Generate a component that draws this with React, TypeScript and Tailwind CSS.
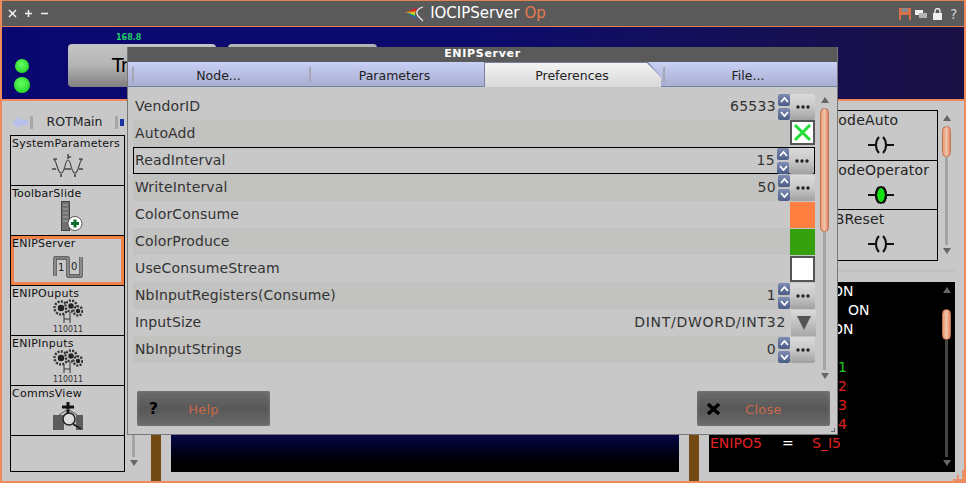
import React from "react";

const font = "[font-family:'DejaVu_Sans',sans-serif]";

const rows: { label: string; kind: string; value?: string }[] = [
  { label: "VendorID", kind: "spin", value: "65533" },
  { label: "AutoAdd", kind: "check" },
  { label: "ReadInterval", kind: "spin", value: "15" },
  { label: "WriteInterval", kind: "spin", value: "50" },
  { label: "ColorConsume", kind: "orange" },
  { label: "ColorProduce", kind: "green" },
  { label: "UseConsumeStream", kind: "white" },
  { label: "NbInputRegisters(Consume)", kind: "spin", value: "1" },
  { label: "InputSize", kind: "combo", value: "DINT/DWORD/INT32" },
  { label: "NbInputStrings", kind: "spin", value: "0" },
];

const WaveIcon = () => (
  <svg width="34" height="24" viewBox="0 0 34 24" fill="none" stroke="#444" strokeWidth="1.1">
    <path d="M2 5 C6 5 6 19 10 19 C14 19 14 6 17 6 C20 6 20 19 24 19 C28 19 28 5 32 5" />
    <path d="M1 15h4M13 15h7M28 15h4" strokeWidth="1.6" />
    <path d="M17 0v5M20 3h-3" strokeWidth="1.4" />
    <path d="M10 20v3M24 20v3" strokeWidth="1.6" />
    <path d="M6 5h-3M31 5h-3" strokeWidth="1.6" />
  </svg>
);

const SliderIcon = () => (
  <svg width="22" height="30" viewBox="0 0 22 30" className="ml-[9px]">
    <rect x="0.5" y="0.5" width="8" height="29" fill="#707070" stroke="#444" />
    <path d="M2 4h5M2 8h5M2 12h5M2 16h5M2 20h5" stroke="#a8a8a8" />
    <circle cx="14" cy="22.5" r="7" fill="#fff" stroke="#555" />
    <path d="M14 18.5v8M10 22.5h8" stroke="#0a6b2c" strokeWidth="3" />
  </svg>
);

const OneZeroIcon = () => (
  <svg width="30" height="23" viewBox="0 0 30 23" fill="none">
    <path d="M2 21V3h13v18h13V2" stroke="#444" strokeWidth="3.4" strokeLinejoin="round" />
    <path d="M2 21V3h13v18h13V2" stroke="#b8b8b8" strokeWidth="1.2" strokeLinejoin="round" />
    <text x="5" y="16" fontSize="10" fill="#222" fontFamily="DejaVu Sans">1</text>
    <text x="18" y="15" fontSize="10" fill="#222" fontFamily="DejaVu Sans">0</text>
  </svg>
);

const Gear = ({ x, y, r }: { x: number; y: number; r: number }) => (
  <g>
    <circle cx={x} cy={y} r={r} fill="#c8c8c8" stroke="#333" strokeWidth="2.4" strokeDasharray="2 1.3" />
    <circle cx={x} cy={y} r={r * 0.5} fill="#222" />
  </g>
);

const GearsIcon = () => (
  <svg width="30" height="38" viewBox="0 0 30 38">
    <Gear x={8} y={11} r={6.5} />
    <Gear x={18} y={9} r={5.5} />
    <Gear x={25} y={14} r={4.5} />
    <path d="M11 18v8M17 15v11M11 22h6" stroke="#333" fill="none" />
    <text x="0" y="35" fontSize="9" fill="#333" fontFamily="DejaVu Sans" textLength="30" lengthAdjust="spacingAndGlyphs">110011</text>
  </svg>
);

const CommsIcon = () => (
  <svg width="30" height="28" viewBox="0 0 30 28">
    <rect x="0" y="13" width="11" height="15" fill="#5c5c5c" />
    <rect x="23" y="13" width="7" height="15" fill="#5c5c5c" />
    <path d="M15 0v12M9 5h12" stroke="#111" strokeWidth="3" />
    <path d="M6 13l9-6 9 6" stroke="#555" fill="none" />
    <circle cx="16" cy="17" r="6" fill="#ddd" stroke="#222" strokeWidth="1.5" />
    <path d="M20 22l8 5" stroke="#222" strokeWidth="2" />
  </svg>
);

const Contact = ({ on }: { on?: boolean }) => (
  <svg width="26" height="18" viewBox="0 0 26 18" fill="none" stroke="#111" strokeWidth="2">
    {on && <ellipse cx="13" cy="9" rx="5" ry="8" fill="#14e014" />}
    <path d="M0 9h9M17 9h9" />
    <path d="M11 1C7 5 7 13 11 17M15 1c4 4 4 12 0 16" />
  </svg>
);

const navItems = [
  { name: "SystemParameters", icon: <WaveIcon />, pb: "pb-[7px]" },
  { name: "ToolbarSlide", icon: <SliderIcon />, pb: "pb-[4px]" },
  { name: "ENIPServer", icon: <OneZeroIcon />, active: true, pb: "pb-[4px]" },
  { name: "ENIPOuputs", icon: <GearsIcon />, pb: "" },
  { name: "ENIPInputs", icon: <GearsIcon />, pb: "" },
  { name: "CommsView", icon: <CommsIcon />, pb: "pb-[5px]" },
];

const Thumb = ({ className }: { className: string }) => (
  <div className={`w-[9px] shrink-0 rounded-full border border-[#c8704c] bg-gradient-to-r from-[#e89a78] via-[#f2c4a8] to-[#dc8a68] ${className}`} />
);

// arrows and rail of a scroll bar, thumb given by offset classes
const ScrollBar = ({ thumb, tail, dark, noThumb }: { thumb: string; tail: string; dark?: boolean; noThumb?: boolean }) => (
  <div className="flex w-[9px] flex-col items-center">
    <div className="h-0 w-0 border-x-[4px] border-b-[6px] border-x-transparent border-b-[#666]" />
    {!noThumb && <Thumb className={thumb} />}
    <div className={`w-[3px] ${dark ? "bg-[#444]" : "bg-[#a4a4a4]"} ${tail}`} />
    <div className="mt-[3px] h-0 w-0 border-x-[4px] border-t-[6px] border-x-transparent border-t-[#666]" />
  </div>
);

const Spin = () => (
  <div className="flex h-[26px] w-[12px] flex-col justify-between">
    {[0, 1].map((i) => (
      <div key={i} className="flex h-[12px] items-center justify-center rounded-[2px] bg-gradient-to-b from-[#7c8cb4] to-[#4c5c88]">
        <svg width="9" height="6" viewBox="0 0 9 6" fill="none" stroke="#fff" strokeWidth="1.8">
          <path d={i === 0 ? "M1 5l3.5-4L8 5" : "M1 1l3.5 4L8 1"} />
        </svg>
      </div>
    ))}
  </div>
);

const DotsButton = () => (
  <div className="flex h-[26px] w-[25px] items-center justify-center rounded-[2px] bg-gradient-to-b from-[#dadada] via-[#c8c8c8] to-[#a0a0a0]">
    <svg width="14" height="4" viewBox="0 0 14 4" fill="#222">
      <circle cx="2" cy="2" r="1.7" />
      <circle cx="7" cy="2" r="1.7" />
      <circle cx="12" cy="2" r="1.7" />
    </svg>
  </div>
);

const RowEnd = ({ kind, value }: { kind: string; value?: string }) => {
  if (kind === "spin") {
    return (
      <div className="flex items-center">
        <span className="mr-[2px] text-[14px] tracking-[0.3px] text-[#333]">{value}</span>
        <Spin />
        <DotsButton />
      </div>
    );
  }
  if (kind === "combo") {
    return (
      <div className="-mr-px flex items-center">
        <span className="mr-[5px] text-[14px] tracking-[0.7px] text-[#333]">{value}</span>
        <div className="flex h-[26px] w-[25px] items-center justify-center bg-gradient-to-b from-[#dadada] to-[#a8a8a8]">
          <div className="h-0 w-0 border-x-[7px] border-t-[14px] border-x-transparent border-t-[#555]" />
        </div>
      </div>
    );
  }
  if (kind === "check") {
    return (
      <div className="mb-[2px] h-[25px] w-[25px] border-2 border-[#555] bg-white">
        <svg width="21" height="21" viewBox="0 0 21 21" stroke="#22dd33" strokeWidth="3">
          <path d="M3 3l15 15M18 3L3 18" />
        </svg>
      </div>
    );
  }
  if (kind === "orange") return <div className="h-[26px] w-[25px] bg-[#ff7f40]" />;
  if (kind === "green") return <div className="h-[26px] w-[25px] bg-[#33a00c]" />;
  return <div className="h-[26px] w-[25px] border-2 border-[#555] bg-white" />;
};

const tabs = [
  { name: "Node...", w: "w-[177px]" },
  { name: "Parameters", w: "w-[175px]" },
  { name: "Preferences", w: "w-[179px]" },
  { name: "File...", w: "w-[174px]" },
];

const Dialog = () => (
  <div className="absolute top-[47px] left-[125px] flex h-[388px] w-[711px] flex-col border-x border-b border-[#777] bg-[#c8c8c8]">
    <div className="flex h-[15px] shrink-0 items-center justify-center bg-[#5a5a5a] text-[11px] font-bold tracking-[0.7px] text-white">
      ENIPServer
    </div>
    <div className="flex h-[25px] shrink-0 border-b border-[#7880a4] bg-gradient-to-b from-[#c8d0f6] to-[#a8aed0] pl-[4px] text-[12.5px] text-[#222]">
      {tabs.map((t) =>
        t.name === "Preferences" ? (
          <div key={t.name} className={`-mb-px h-[25px] ${t.w} bg-[#7880a4] [clip-path:polygon(0_0,164px_0,177px_15px,177px_100%,0_100%)]`}>
            <div className="ml-[1px] flex h-full items-center justify-center bg-gradient-to-b from-[#f4f4f4] to-[#d8d8d8] pt-[4px] pr-[4px] [clip-path:polygon(0_1px,162px_1px,176px_15px,176px_100%,0_100%)]">
              {t.name}
            </div>
          </div>
        ) : (
          <div key={t.name} className={`flex ${t.w} items-center`}>
            <div className="h-[15px] w-[2px] bg-[#a6a6b4]" />
            <span className="flex-1 pt-[4px] pr-[6px] text-center">{t.name}</span>
          </div>
        )
      )}
    </div>
    <div className="flex min-h-0 flex-1 pt-[6px] pl-[5px]">
      <div className="flex w-[682px] flex-col">
        {rows.map((r, i) => (
          <div
            key={r.label}
            className={`flex h-[27px] items-center justify-between ${
              r.label === "ReadInterval" ? "border border-black pl-[1px]" : i % 2 === 1 ? "bg-[#c2c2c0] pl-[2px]" : "pl-[2px]"
            }`}
          >
            <span className="text-[14px] tracking-[0.15px] text-[#333]">{r.label}</span>
            <RowEnd kind={r.kind} value={r.value} />
          </div>
        ))}
      </div>
      <div className="ml-[5px] pt-[4px]">
        <ScrollBar thumb="mt-[5px] h-[124px]" tail="h-[138px]" />
      </div>
    </div>
    <div className="flex shrink-0 justify-between pr-[7px] pb-[8px] pl-[9px]">
      {["Help", "Close"].map((label) => (
        <div
          key={label}
          className="flex h-[35px] w-[133px] items-center rounded-[2px] bg-gradient-to-b from-[#6c6c6c] via-[#585858] to-[#6a6a6a] pl-[10px] shadow-[inset_0_0_4px_#7a7a7a]"
        >
          <div className="flex w-[13px] justify-center">
            {label === "Help" ? (
              <span className="text-[16px] font-bold leading-none text-black">?</span>
            ) : (
              <svg width="13" height="12" viewBox="0 0 13 12" stroke="#000" strokeWidth="3.4">
                <path d="M1 1l11 10M12 1L1 11" />
              </svg>
            )}
          </div>
          <span className="flex-1 pt-[2px] pr-[23px] text-center text-[13px] tracking-[0.2px] text-[#c86a48]">{label}</span>
        </div>
      ))}
    </div>
    <div className="absolute right-[2px] bottom-[2px] h-[4px] w-[4px] border-r border-b border-[#666]" />
  </div>
);

// only what shows to the right of the dialog is written out, except the last line
const terminal = [
  { pad: "pl-[122px]", v: "ON", c: "text-white" },
  { pad: "pl-[138px]", v: "ON", c: "text-white" },
  { pad: "pl-[122px]", v: "ON", c: "text-white" },
  { pad: "", v: "", c: "" },
  { pad: "pl-[128px]", v: "1", c: "text-[#22c822]" },
  { pad: "pl-[128px]", v: "2", c: "text-[#e02020]" },
  { pad: "pl-[128px]", v: "3", c: "text-[#e02020]" },
  { pad: "pl-[128px]", v: "4", c: "text-[#e02020]" },
];

export default function App() {
  return (
    <div className={`${font} relative flex h-[483px] w-[966px] flex-col overflow-hidden border-x-2 border-b-2 border-[#f08a5c] bg-[#c8c8c8]`}>
      {/* title bar */}
      <div className="flex h-[27px] shrink-0 items-center justify-between border-y border-[#e08050] bg-[#5a5a5a] pr-[7px] pl-[6px] text-white">
        <div className="flex w-[100px] items-center gap-[7px]">
          <svg width="9" height="9" viewBox="0 0 9 9" stroke="#eee" strokeWidth="1.5" fill="none">
            <path d="M1 1l7 7M8 1L1 8M3 4.5h3" />
          </svg>
          <svg width="9" height="9" viewBox="0 0 9 9" stroke="#eee" strokeWidth="1.6">
            <path d="M4.5 1v7M1 4.5h7" />
          </svg>
          <svg width="9" height="9" viewBox="0 0 9 9" stroke="#eee" strokeWidth="1.6">
            <path d="M1 4.5h7" />
          </svg>
        </div>
        <div className="flex items-center gap-[5px] pr-[15px] text-[15px]">
          <svg width="21" height="16" viewBox="0 0 21 16" fill="none">
            <path d="M1 6L13 2l-1 3z" fill="#e02020" />
            <path d="M1 6L12 5l-1 2z" fill="#f09020" />
            <path d="M1 6L11 7v2z" fill="#e8e020" />
            <path d="M1 6L11 9l1 2z" fill="#20c040" />
            <path d="M1 6L12 11l1 2z" fill="#2060e0" />
            <path d="M1 6L13 13l2 1z" fill="#9030c0" />
            <path d="M19 1C14 2 11 6 14 10L19 15" stroke="#eee" strokeWidth="1.2" />
          </svg>
          <span>IOCIPServer</span>
          <span className="text-[#e8794c]">Op</span>
        </div>
        <div className="flex w-[100px] items-center justify-end">
          <svg width="12" height="12" viewBox="0 0 12 12">
            <rect width="12" height="12" fill="#d8704c" />
            <rect x="3" y="0" width="6" height="4" fill="#8a8a8a" />
            <rect x="2" y="7" width="8" height="5" fill="#5a5a5a" />
          </svg>
          <svg width="12" height="10" viewBox="0 0 12 10" className="ml-[4px]">
            <rect x="0" y="1" width="8" height="5" fill="#eee" />
            <rect x="4" y="4" width="8" height="5" fill="#b4b4b4" />
          </svg>
          <svg width="9" height="12" viewBox="0 0 9 12" className="ml-[6px]">
            <rect x="0" y="5" width="9" height="7" fill="#eee" />
            <path d="M2 5V3a2.5 2.5 0 0 1 5 0v2" stroke="#eee" fill="none" strokeWidth="1.3" />
          </svg>
          <span className="ml-[8px] w-[7px] text-[14px] leading-none text-[#ccc]">?</span>
        </div>
      </div>

      {/* navy header */}
      <div className="flex h-[74px] shrink-0 border-b-2 border-[#f08a5c] bg-gradient-to-r from-[#0a0870] via-[#0c0a6c] to-[#1a1044]">
        <div className="mt-[32px] ml-[12px] flex w-[16px] flex-col items-center gap-[4px] self-start">
          <div className="h-[14px] w-[14px] rounded-full bg-[radial-gradient(circle_at_45%_40%,#66ff66,#12c812)]" />
          <div className="h-[16px] w-[16px] rounded-full bg-[radial-gradient(circle_at_45%_40%,#66ff66,#12c812)]" />
        </div>
        <div className="relative mt-[17px] ml-[38px] flex h-[43px] w-[148px] items-center self-start rounded-[4px] bg-gradient-to-b from-[#c4c4c4] via-[#b4b4b4] to-[#808080] pl-[44px] text-[19px] text-black">
          Tr
          <span className="absolute -top-[12px] left-[48px] text-[8px] font-bold text-[#22cc66]">168.8</span>
        </div>
        <div className="mt-[17px] ml-[12px] h-[43px] w-[149px] self-start rounded-[4px] bg-[#b4b4b4]" />
      </div>

      {/* main area */}
      <div className="flex min-h-0 flex-1">
        {/* left list */}
        <div className="ml-[8px] flex w-[115px] shrink-0 flex-col pt-[9px]">
          <div className="flex h-[25px] items-center text-[12.5px] text-[#222]">
            <svg width="16" height="13" viewBox="0 0 16 13" className="ml-[2px]">
              <path d="M0 6.5l7-6v3h9v6H7v3z" fill="#b6c0ea" />
            </svg>
            <div className="ml-[2px] h-[13px] w-[3px] bg-[#a6a6a6]" />
            <span className="flex-1 pl-[1px] text-center">ROTMain</span>
            <div className="h-[13px] w-[3px] bg-[#a6a6a6]" />
            <div className="mr-[1px] ml-[2px] h-[7px] w-[4px] bg-[#1830a0]" />
          </div>
          <div className="flex h-[337px] flex-col border border-black">
            {navItems.map((n) => (
              <div key={n.name} className="h-[50px] shrink-0 border-b border-black">
                <div className={`relative flex h-full justify-center ${n.active ? "border-[3px] border-[#f08048]" : ""}`}>
                  <span className={`absolute ${n.active ? "-top-[2px] -left-[2px]" : "top-[1px] left-[1px]"} text-[11px] leading-[13px] tracking-[0.25px] text-[#111]`}>
                    {n.name}
                  </span>
                  <div className={`flex flex-1 items-end justify-center ${n.pb}`}>{n.icon}</div>
                </div>
              </div>
            ))}
          </div>
        </div>

        <div className="ml-[4px] pt-[35px]">
          <ScrollBar noThumb thumb="" tail="mt-[6px] h-[309px]" />
        </div>

        {/* center */}
        <div className="ml-[13px] h-full w-[10px] shrink-0 bg-[#714a14]" />
        <div className="flex h-full w-[528px] shrink-0 flex-col justify-end px-[10px] pb-[9px]">
          <div className="h-[40px] bg-gradient-to-b from-[#0a0a50] to-black" />
        </div>
        <div className="h-full w-[10px] shrink-0 bg-[#714a14]" />

        {/* right column */}
        <div className="ml-[10px] flex w-[246px] shrink-0 flex-col pt-[9px]">
          <div className="flex justify-end">
            <div className="flex h-[151px] w-[115px] flex-col border border-black">
              {[
                { n: "ModeAuto", on: false },
                { n: "ModeOperator", on: true },
                { n: "PBReset", on: false },
              ].map((c, i) => (
                <div key={c.n} className={`flex h-[50px] flex-col items-center ${i < 2 ? "border-b border-black" : ""}`}>
                  <span className="w-full pl-[2px] text-[14px] leading-[18px] tracking-[0.2px] text-[#222]">{c.n}</span>
                  <div className="mt-[7px]"><Contact on={c.on} /></div>
                </div>
              ))}
            </div>
            <div className="mr-[4px] ml-[4px] pt-[5px]">
              <ScrollBar thumb="mt-[5px] h-[31px]" tail="h-[88px]" />
            </div>
          </div>
          <div className="mt-[8px] h-[3px] bg-[#c0c0be]" />
          <div className="mt-[10px] flex h-[190px] bg-black pl-[1px]">
            <div className="flex flex-1 flex-col text-[14px] leading-[19px]">
              {terminal.map((t, i) => (
                <div key={i} className={`h-[19px] ${t.pad} ${t.c}`}>{t.v}</div>
              ))}
              <div className="flex h-[19px]">
                <span className="w-[72px] text-[#e02020]">ENIPO5</span>
                <span className="w-[30px] text-white">=</span>
                <span className="text-[#e02020]">S_I5</span>
              </div>
            </div>
            <div className="mr-[4px] pt-[5px]">
              <ScrollBar dark thumb="mt-[16px] h-[31px]" tail="h-[117px]" />
            </div>
          </div>
        </div>
      </div>

      <svg width="12" height="12" viewBox="0 0 12 12" className="absolute right-0 bottom-0" fill="none" stroke="#e8906c" strokeWidth="2">
        <path d="M11 1v10H1" />
        <path d="M6 6v5" />
      </svg>

      <Dialog />
    </div>
  );
}
